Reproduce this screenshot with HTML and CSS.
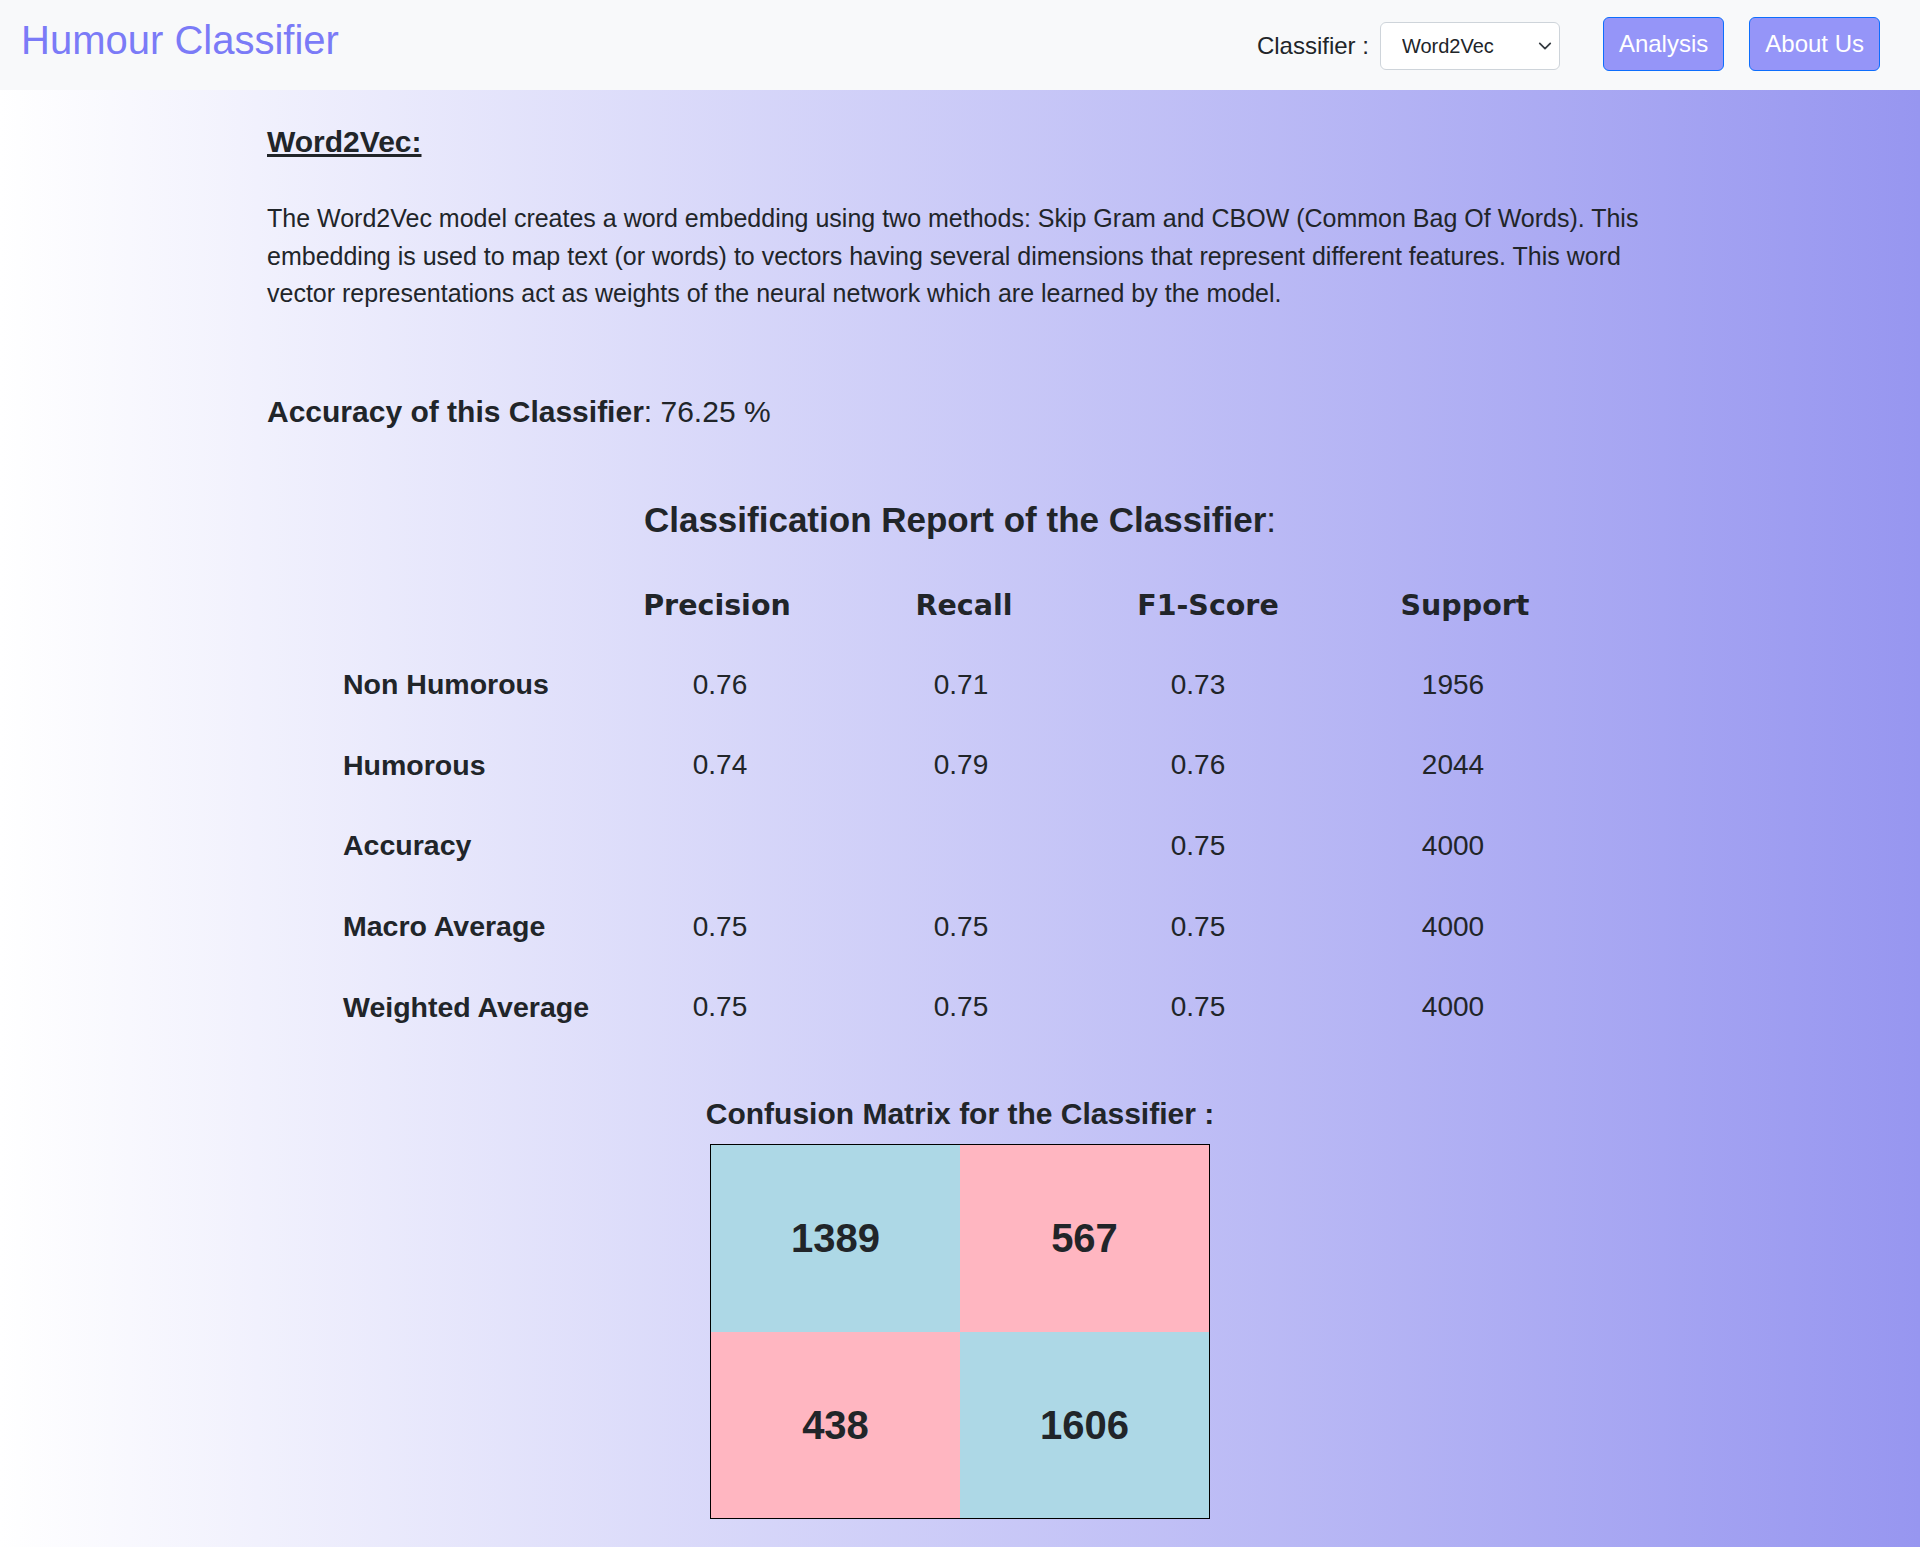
FILE: index.html
```html
<!DOCTYPE html>
<html lang="en">
<head>
<meta charset="utf-8">
<title>Humour Classifier</title>
<link rel="stylesheet" href="styles.css">
</head>
<body>
<nav class="navbar">
  <a class="brand" href="#">Humour Classifier</a>
  <div class="nav-right">
    <label class="picker-label" for="clf">Classifier :</label>
    <span class="picker">
      <select id="clf" class="picker-select">
        <option>Word2Vec</option>
      </select>
      <svg class="picker-chevron" width="16" height="16" viewBox="0 0 16 16"><path d="M2 5l6 6 6-6" fill="none" stroke="#343a40" stroke-width="2" stroke-linecap="round" stroke-linejoin="round"/></svg>
    </span>
    <button class="btn btn-first">Analysis</button>
    <button class="btn">About Us</button>
  </div>
</nav>

<main class="content">
  <h2 class="model-title">Word2Vec:</h2>
  <p class="model-desc">The Word2Vec model creates a word embedding using two methods: Skip Gram and CBOW (Common Bag Of Words). This embedding is used to map text (or words) to vectors having several dimensions that represent different features. This word vector representations act as weights of the neural network which are learned by the model.</p>

  <p class="accuracy"><strong>Accuracy of this Classifier</strong>: 76.25 %</p>

  <h3 class="report-title"><strong>Classification Report of the Classifier</strong>:</h3>

  <table class="report">
    <colgroup>
      <col class="c-label"><col class="c1"><col class="c2"><col class="c3"><col class="c4">
    </colgroup>
    <thead>
      <tr><th></th><th class="h1">Precision</th><th class="h2">Recall</th><th class="h3">F1-Score</th><th class="h4">Support</th></tr>
    </thead>
    <tbody>
      <tr><td class="rl">Non Humorous</td><td>0.76</td><td>0.71</td><td>0.73</td><td>1956</td></tr>
      <tr><td class="rl">Humorous</td><td>0.74</td><td>0.79</td><td>0.76</td><td>2044</td></tr>
      <tr><td class="rl">Accuracy</td><td></td><td></td><td>0.75</td><td>4000</td></tr>
      <tr><td class="rl">Macro Average</td><td>0.75</td><td>0.75</td><td>0.75</td><td>4000</td></tr>
      <tr><td class="rl">Weighted Average</td><td>0.75</td><td>0.75</td><td>0.75</td><td>4000</td></tr>
    </tbody>
  </table>

  <h3 class="cm-title">Confusion Matrix for the Classifier :</h3>
  <div class="matrix">
    <div class="cell good">1389</div>
    <div class="cell bad">567</div>
    <div class="cell bad">438</div>
    <div class="cell good">1606</div>
  </div>
</main>
</body>
</html>
```

FILE: styles.css
```css
html, body {
  margin: 0;
  padding: 0;
}

body {
  min-height: 100vh;
  background: linear-gradient(to right, #ffffff, #9796f0);
  font-family: "Liberation Sans", Arial, sans-serif;
  color: #212529;
}

.navbar {
  height: 90px;
  background: #f8f9fa;
  display: flex;
  align-items: center;
  justify-content: space-between;
  padding: 0 40px 0 21px;
  box-sizing: border-box;
}

.brand {
  font-size: 40px;
  color: #7b7bf7;
  text-decoration: none;
  margin-top: -10px;
}

.nav-right {
  display: flex;
  align-items: center;
}

.picker-label {
  font-size: 24px;
  color: #212529;
  margin-right: 11px;
  margin-top: 2px;
}

.picker {
  position: relative;
  display: inline-block;
  margin-top: 2px;
}

.picker-select {
  appearance: none;
  -webkit-appearance: none;
  width: 180px;
  height: 48px;
  box-sizing: border-box;
  border: 1px solid #ced4da;
  border-radius: 6px;
  background: #ffffff;
  font-family: "Liberation Sans", Arial, sans-serif;
  font-size: 20px;
  color: #212529;
  padding: 0 0 0 21px;
  display: block;
}

.picker-chevron {
  position: absolute;
  right: 8px;
  top: 17px;
  width: 14px;
  height: 14px;
  pointer-events: none;
}

.btn {
  font-family: "Liberation Sans", Arial, sans-serif;
  font-size: 24px;
  color: #ffffff;
  background: #9595f8;
  border: 1px solid #0d6efd;
  border-radius: 6px;
  height: 54px;
  padding: 0 15px;
  margin-left: 25px;
  margin-bottom: 2px;
  cursor: pointer;
}

.btn-first {
  margin-left: 43px;
}

.content {
  width: 1386px;
  margin: 0 auto;
}

.model-title {
  margin: 34px 0 0;
  font-size: 30px;
  line-height: 36px;
  font-weight: bold;
  text-decoration: underline;
}

.model-desc {
  margin: 40px 0 0;
  font-size: 25px;
  line-height: 37.5px;
}

.accuracy {
  margin: 81px 0 0;
  font-size: 30px;
  line-height: 35px;
}

.report-title {
  margin: 70px 0 0;
  font-size: 35px;
  line-height: 42px;
  font-weight: normal;
  text-align: center;
}

.report {
  margin: 26px 0 0 76px;
  border-collapse: collapse;
  table-layout: fixed;
  width: 1249px;
}

.c-label { width: 257px; }
.c1 { width: 240px; }
.c2 { width: 242px; }
.c3 { width: 232px; }
.c4 { width: 278px; }

.report th,
.report td {
  height: 80.6px;
  padding: 0;
  text-align: center;
  vertical-align: middle;
}

.report th {
  height: 78px;
  font-family: "DejaVu Sans", "Liberation Sans", sans-serif;
  font-weight: bold;
  font-size: 28.5px;
}

.report th.h1 { padding-right: 6px; }
.report th.h2 { padding-left: 6px; }
.report th.h3 { padding-left: 20px; }
.report th.h4 { padding-left: 24px; }

.report td {
  font-size: 28px;
}

.report td.rl {
  text-align: left;
  font-weight: bold;
  font-size: 28.5px;
}

.cm-title {
  margin: 49px 0 0;
  font-size: 30px;
  line-height: 36px;
  font-weight: bold;
  text-align: center;
}

.matrix {
  width: 500px;
  height: 375px;
  margin: 12px auto 0;
  box-sizing: border-box;
  border: 1px solid #000000;
  display: grid;
  grid-template-columns: 1fr 1fr;
  grid-template-rows: 1fr 1fr;
}

.cell {
  display: flex;
  align-items: center;
  justify-content: center;
  font-size: 40px;
  font-weight: bold;
  color: #212529;
}

.good { background: #add8e6; }
.bad { background: #ffb6c1; }
```
